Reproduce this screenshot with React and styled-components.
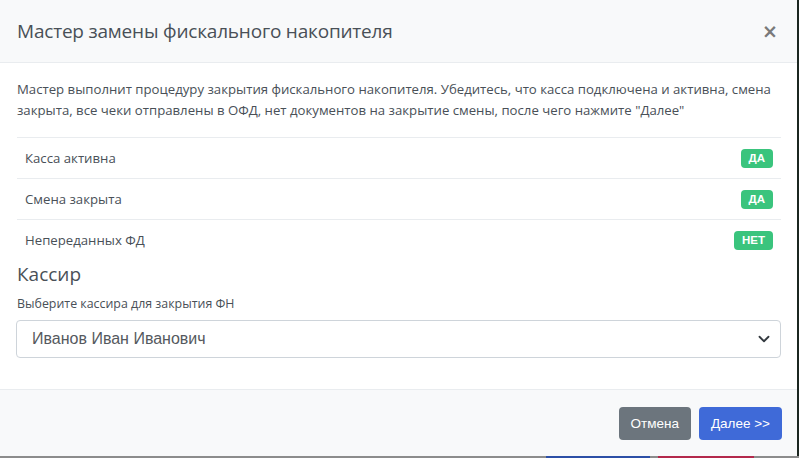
import React from 'react'
import styled, { createGlobalStyle } from 'styled-components'

const GlobalStyle = createGlobalStyle`
  html, body {
    margin: 0;
    padding: 0;
    background: #1b2620;
  }
  body {
    font-family: "Open Sans", "Noto Sans", sans-serif;
    color: #495057;
  }
`;

const checks = [
  { name: 'Касса активна', value: 'Да' },
  { name: 'Смена закрыта', value: 'Да' },
  { name: 'Непереданных ФД', value: 'Нет' },
];

const Badge = ({ children }) => <BadgeStyled>{children}</BadgeStyled>

const CheckRow = ({ name, value }) => (
  <Row>
    <span>{name}</span>
    <Badge>{value}</Badge>
  </Row>
)

const Chevron = () => (
  <svg width="12" height="12" viewBox="0 0 16 16">
    <path d="M2 5l6 6 6-6" fill="none" stroke="#343a40" strokeWidth="2.4" strokeLinecap="round" strokeLinejoin="round" />
  </svg>
)

const App = () => {
  return (
    <Screen>
      <GlobalStyle />
      <Modal>
        <Header>
          <Title>Мастер замены фискального накопителя</Title>
          <Close>×</Close>
        </Header>
        <Body>
          <Intro>
            Мастер выполнит процедуру закрытия фискального накопителя. Убедитесь, что касса подключена и активна, смена закрыта, все чеки отправлены в ОФД, нет документов на закрытие смены, после чего нажмите "Далее"
          </Intro>
          <div>
            {checks.map(c => (
              <CheckRow key={c.name} name={c.name} value={c.value} />
            ))}
          </div>
          <SectionTitle>Кассир</SectionTitle>
          <FieldLabel>Выберите кассира для закрытия ФН</FieldLabel>
          <Select>
            <span>Иванов Иван Иванович</span>
            <Chevron />
          </Select>
        </Body>
        <Footer>
          <Button variant="secondary">Отмена</Button>
          <Button variant="primary">Далее &gt;&gt;</Button>
        </Footer>
      </Modal>
      <Backdrop>
        <Bar color="#2c4fa6" from={546} width={104} />
        <Bar color="#b3284b" from={8} width={96} />
      </Backdrop>
    </Screen>
  )
}

const Screen = styled.div`
  width: 799px;
  height: 458px;
  overflow: hidden;
  background: #1b2620;
`;

const Modal = styled.div`
  width: 797px;
  height: 456px;
  background: #fff;
  display: flex;
  flex-direction: column;
  box-sizing: border-box;
`;

const Header = styled.div`
  display: flex;
  align-items: center;
  justify-content: space-between;
  height: 63px;
  padding: 0 19px 0 17px;
  box-sizing: border-box;
  background: #f8f9fa;
  border-bottom: 1px solid #e9ecef;
`;

const Title = styled.h5`
  margin: 0;
  font-size: 19px;
  letter-spacing: -0.2px;
  font-weight: 400;
  color: #495057;
  line-height: 30px;
`;

const Close = styled.span`
  font-size: 19px;
  font-weight: 700;
  color: #7a7a7a;
  line-height: 1;
  font-family: "DejaVu Sans", sans-serif;
`;

const Body = styled.div`
  flex: 1;
  padding: 16px 16px 0 17px;
  box-sizing: border-box;
`;

const Intro = styled.p`
  margin: 0 0 16px;
  font-size: 13.2px;
  line-height: 21px;
  color: #495057;
`;

const Row = styled.div`
  display: flex;
  align-items: center;
  justify-content: space-between;
  height: 40px;
  padding: 0 8px;
  border-top: 1px solid #e9ecef;
  font-size: 13.2px;
  color: #495057;
`;

const BadgeStyled = styled.span`
  display: inline-flex;
  align-items: center;
  height: 19px;
  padding: 0 8px;
  border-radius: 4px;
  background: #3ac47d;
  color: #fff;
  font-size: 11.5px;
  font-weight: 700;
  text-transform: uppercase;
  font-family: "Liberation Sans", sans-serif;
`;

const SectionTitle = styled.h5`
  margin: 2px 0 0;
  font-size: 19px;
  font-weight: 400;
  line-height: 24px;
  color: #495057;
`;

const FieldLabel = styled.div`
  margin-top: 8px;
  font-size: 12.4px;
  line-height: 19px;
  color: #495057;
`;

const Select = styled.div`
  display: flex;
  align-items: center;
  justify-content: space-between;
  margin: 7px 0 0 -1px;
  height: 38px;
  padding: 0 10px 0 15px;
  border: 1px solid #ced4da;
  border-radius: 4px;
  box-sizing: border-box;
  font-family: "Liberation Sans", sans-serif;
  font-size: 16px;
  color: #55595e;
`;

const Footer = styled.div`
  display: flex;
  justify-content: flex-end;
  align-items: center;
  gap: 8px;
  height: 67px;
  padding: 1px 15px 0 0;
  box-sizing: border-box;
  background: #f8f9fa;
  border-top: 1px solid #e9ecef;
`;

const Button = styled.button`
  height: 33px;
  padding: 0 12px;
  border: none;
  border-radius: 4px;
  font-family: "Liberation Sans", sans-serif;
  font-size: 13.5px;
  color: #fff;
  background: ${props => props.variant === 'primary' ? '#3f6ad8' : '#6c757d'};
  min-width: ${props => props.variant === 'primary' ? '83px' : '70px'};
`;

const Backdrop = styled.div`
  display: flex;
  height: 2px;
  background: #8c8c8c;
`;

const Bar = styled.div`
  margin-left: ${props => props.from}px;
  width: ${props => props.width}px;
  background: ${props => props.color};
`;

export default App
